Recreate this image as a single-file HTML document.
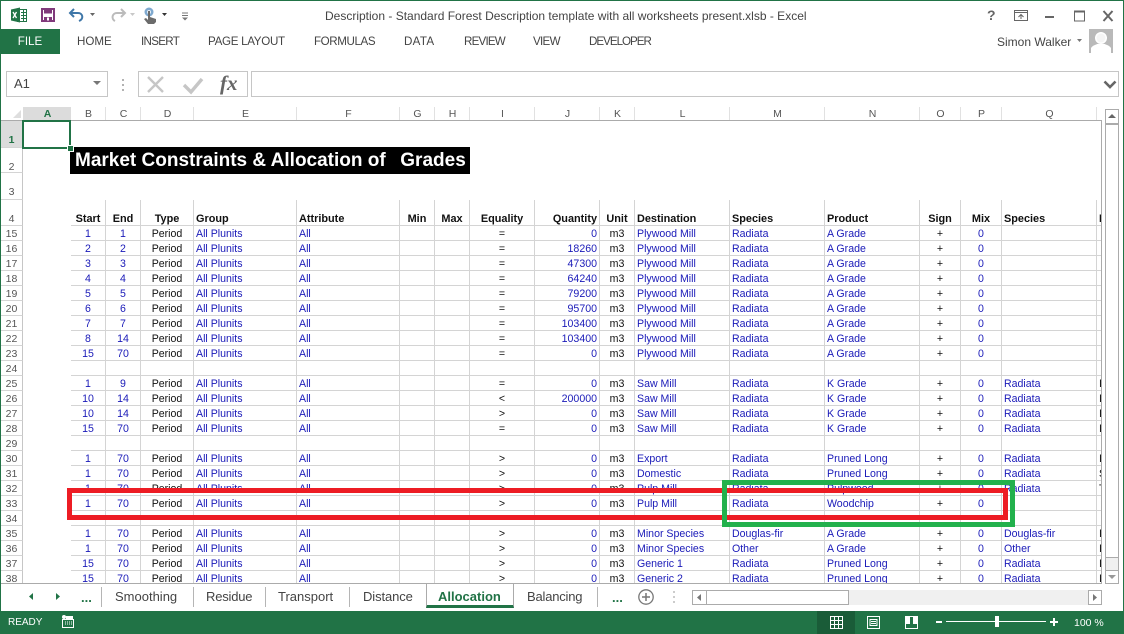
<!DOCTYPE html>
<html><head><meta charset="utf-8"><title>Excel</title>
<style>
html,body{margin:0;padding:0;background:#fff}
body{width:1124px;height:634px;overflow:hidden;position:relative;font-family:"Liberation Sans",sans-serif;color:#444}
.a{position:absolute}
.rib{position:absolute;top:35px;font-size:11.6px;color:#444;white-space:nowrap;line-height:14px}
.box{position:absolute;border:1px solid #c6c6c6;box-sizing:border-box;background:#fff}
.ch{position:absolute;top:107px;height:14px;line-height:15px;font-size:10.5px;color:#555;text-align:center;border-right:1px solid #e1e1e1;box-sizing:border-box;padding-left:1px}
#sheet{position:absolute;left:1px;top:121px;width:1101px;height:462px;overflow:hidden}
.rh{position:absolute;left:0;width:22px;text-align:center;font-size:10.5px;color:#555;border-right:1px solid #c6c6c6;border-bottom:1px solid #d4d4d4;box-sizing:border-box}
table{position:absolute;left:0;top:79px;border-collapse:separate;border-spacing:0;table-layout:fixed;width:1101px;font-size:10.6px;color:#1a1ab8}
td,th{box-sizing:border-box;height:15px;padding:2px 2px 0 2px;border-right:1px solid #d4d4d4;border-bottom:1px solid #d4d4d4;white-space:nowrap;overflow:hidden;font-weight:normal;line-height:12px;text-align:left}
th{padding:2px 0 0 0;text-align:center;font-size:10.5px;color:#555;border-right:1px solid #c6c6c6}
td.x{border:0}
td:nth-child(3),td:nth-child(4),td:nth-child(17){text-align:center}
td:nth-child(5),td:nth-child(10),td:nth-child(12),td:nth-child(16){text-align:center;color:#111}
td:nth-child(11){text-align:right}
td:nth-child(19){padding:2px 0 0 2px;color:#111;border-right:0}
tr.h td,tr.h th{height:26px;vertical-align:bottom;line-height:12px;padding-top:0}
tr.h td{font-weight:bold;color:#111;font-size:10.9px}
tr.h td:nth-child(11){text-align:right}
tr.h td:nth-child(12){padding:0}
.tab{position:absolute;top:589px;font-size:13px;color:#444;line-height:16px;white-space:nowrap}
.sep{position:absolute;top:587px;width:1px;height:20px;background:#b5b5b5}
</style></head>
<body>
<!-- window border -->
<div class="a" style="left:0;top:0;width:1124px;height:1px;background:#217346"></div>
<div class="a" style="left:0;top:0;width:1px;height:634px;background:#217346"></div>
<div class="a" style="left:1123px;top:0;width:1px;height:634px;background:#217346"></div>

<!-- QAT -->
<svg class="a" style="left:10px;top:7px" width="190" height="20" viewBox="0 0 190 20">
<rect x="7.500" y="2.500" width="9" height="12" fill="#fff" stroke="#217346"/>
<path d="M11 5.500h5M11 8.500h5M11 11.500h5M13.500 3v11" stroke="#217346" fill="none"/>
<path d="M1 2.500l9-2v15l-9-2z" fill="#217346"/>
<path d="M3 5l3.500 6M6.500 5l-3.500 6" stroke="#fff" stroke-width="1.300"/>
<rect x="32" y="2" width="12" height="12" fill="#fff" stroke="#80397b" stroke-width="2"/>
<rect x="34" y="2" width="8" height="4.500" fill="#80397b"/>
<rect x="34" y="10" width="8" height="4" fill="#80397b"/>
<rect x="37" y="10.500" width="2" height="3" fill="#fff"/>
<path d="M64 2l-4 4 4 4" fill="none" stroke="#3f77a8" stroke-width="2"/>
<path d="M61 6h7c5 0 6 6 1 8" fill="none" stroke="#3f77a8" stroke-width="2"/>
<path d="M80 6h5l-2.500 3z" fill="#666"/>
<path d="M111 2l4 4-4 4" fill="none" stroke="#bbb" stroke-width="2"/>
<path d="M114 6h-7c-5 0-6 6-2 8" fill="none" stroke="#bbb" stroke-width="2"/>
<path d="M120 6h5l-2.500 3z" fill="#c8c8c8"/>
<circle cx="139" cy="5" r="4.500" fill="#7fa9cf"/>
<circle cx="139" cy="5" r="2" fill="#e8eff6"/>
<path d="M138 4h2v6l6 2v3l-2 2h-6l-4-5 2-1 2 2z" fill="#6b6b6b"/>
<path d="M152 6h5l-2.500 3z" fill="#333"/>
<path d="M172 6h6M172 8.500h6" stroke="#777"/>
<path d="M172 10.500h6l-3 3z" fill="#777"/>
</svg>

<div class="a" style="left:325px;top:8px;font-size:12px;color:#444;line-height:16px;white-space:nowrap">Description - Standard Forest Description template with all worksheets present.xlsb - Excel</div>

<!-- window buttons -->
<div class="a" style="left:987px;top:7px;font-size:14px;font-weight:bold;color:#666;line-height:16px">?</div>
<svg class="a" style="left:1010px;top:6px" width="114" height="20" viewBox="0 0 114 20">
<rect x="4.500" y="4.500" width="13" height="10" fill="none" stroke="#666"/><path d="M4 6.500h14" stroke="#666"/>
<path d="M11 13V9M8.500 11l2.500-2.500 2.500 2.500" fill="none" stroke="#666"/>
<path d="M35 11h9" stroke="#666" stroke-width="2"/>
<rect x="64.500" y="5" width="10" height="10" fill="none" stroke="#666"/><path d="M64 5.500h11" stroke="#666" stroke-width="2"/>
<path d="M93.500 5l9 10M102.500 5l-9 10" stroke="#666" stroke-width="2"/>
</svg>

<!-- Ribbon tabs -->
<div class="a" style="left:0;top:29px;width:60px;height:25px;background:#217346;color:#fff;text-align:center;font-size:11.600px;line-height:26px">FILE</div>
<div class="rib" style="left:77px">HOME</div>
<div class="rib" style="left:141px;letter-spacing:-.7px">INSERT</div>
<div class="rib" style="left:208px;letter-spacing:-.3px">PAGE LAYOUT</div>
<div class="rib" style="left:314px;letter-spacing:-.4px">FORMULAS</div>
<div class="rib" style="left:404px;letter-spacing:.3px">DATA</div>
<div class="rib" style="left:464px;letter-spacing:-.8px">REVIEW</div>
<div class="rib" style="left:533px;letter-spacing:-.7px">VIEW</div>
<div class="rib" style="left:589px;letter-spacing:-1px">DEVELOPER</div>
<div class="rib" style="left:997px;font-size:12px">Simon Walker</div>
<svg class="a" style="left:1076px;top:38px" width="8" height="6"><path d="M1 1h5l-2.500 3z" fill="#777"/></svg>
<svg class="a" style="left:1089px;top:29px" width="24" height="24" viewBox="0 0 24 24"><rect width="24" height="24" fill="#b9b9b9"/><circle cx="12" cy="9" r="5.500" fill="#fff" stroke="#fff"/><path d="M2 24v-5c2-3 5-3 6-4h8c1 1 4 1 6 4v5z" fill="#fff"/><circle cx="12" cy="9" r="4.500" fill="#b9b9b9" opacity=".15"/></svg>

<!-- Formula bar -->
<div class="box" style="left:6px;top:71px;width:102px;height:26px;font-size:13px;line-height:24px;padding-left:7px;color:#444">A1</div>
<svg class="a" style="left:92px;top:80px" width="12" height="8"><path d="M1 1h8L5 5z" fill="#777"/></svg>
<svg class="a" style="left:120px;top:78px" width="6" height="14"><path d="M3 1v2M3 6v2M3 11v2" stroke="#999" stroke-width="1.500"/></svg>
<div class="box" style="left:138px;top:71px;width:110px;height:26px"></div>
<svg class="a" style="left:145px;top:74px" width="100" height="22" viewBox="0 0 100 22">
<path d="M3 3l15 15M18 3L3 18" stroke="#c6c6c6" stroke-width="2.400"/>
<path d="M39 11l7 7 11-13" fill="none" stroke="#c6c6c6" stroke-width="3.400"/>
<text x="75" y="16" font-family="Liberation Serif,serif" font-style="italic" font-weight="bold" font-size="21" fill="#666">fx</text>
</svg>
<div class="box" style="left:251px;top:71px;width:868px;height:26px"></div>
<svg class="a" style="left:1103px;top:80px" width="14" height="10"><path d="M1.500 1.500L7 7l5.500-5.500" fill="none" stroke="#666" stroke-width="2.600"/></svg>

<!-- Column headers -->
<svg class="a" style="left:12px;top:109px" width="10" height="10"><path d="M9 1v8H1z" fill="#dedede"/></svg>
<div class="ch" style="left:23px;width:48px;background:#dcdcdc;color:#217346;font-weight:bold;border-right:0;border-bottom:1px solid #aaa">A</div>
<div class="ch" style="left:71px;width:35px">B</div>
<div class="ch" style="left:106px;width:35px">C</div>
<div class="ch" style="left:141px;width:53px">D</div>
<div class="ch" style="left:194px;width:103px">E</div>
<div class="ch" style="left:297px;width:103px">F</div>
<div class="ch" style="left:400px;width:35px">G</div>
<div class="ch" style="left:435px;width:35px">H</div>
<div class="ch" style="left:470px;width:65px">I</div>
<div class="ch" style="left:535px;width:65px">J</div>
<div class="ch" style="left:600px;width:35px">K</div>
<div class="ch" style="left:635px;width:95px">L</div>
<div class="ch" style="left:730px;width:95px">M</div>
<div class="ch" style="left:825px;width:95px">N</div>
<div class="ch" style="left:920px;width:41px">O</div>
<div class="ch" style="left:961px;width:41px">P</div>
<div class="ch" style="left:1002px;width:95px">Q</div>
<div class="a" style="left:1px;top:120px;width:1101px;height:1px;background:#ababab"></div>

<!-- Sheet -->
<div id="sheet">
<div class="rh" style="top:0;height:27px;line-height:38px;background:#dcdcdc;color:#217346;font-weight:bold">1</div>
<div class="rh" style="top:27px;height:25px;line-height:38px">2</div>
<div class="rh" style="top:52px;height:27px;line-height:38px">3</div>
<table>
<colgroup><col style="width:22px"><col style="width:48px"><col style="width:35px"><col style="width:35px"><col style="width:53px"><col style="width:103px"><col style="width:103px"><col style="width:35px"><col style="width:35px"><col style="width:65px"><col style="width:65px"><col style="width:35px"><col style="width:95px"><col style="width:95px"><col style="width:95px"><col style="width:41px"><col style="width:41px"><col style="width:95px"><col style="width:5px"></colgroup>
<tr class="h"><th>4</th><td class="x"></td><td>Start</td><td>End</td><td>Type</td><td>Group</td><td>Attribute</td><td style="text-align:center">Min</td><td style="text-align:center">Max</td><td>Equality</td><td>Quantity</td><td>Unit</td><td>Destination</td><td>Species</td><td>Product</td><td>Sign</td><td>Mix</td><td>Species</td><td>I</td></tr>
<tr><th>15</th><td class="x"></td><td>1</td><td>1</td><td>Period</td><td>All Plunits</td><td>All</td><td></td><td></td><td>=</td><td>0</td><td>m3</td><td>Plywood Mill</td><td>Radiata</td><td>A Grade</td><td>+</td><td>0</td><td></td><td></td></tr>
<tr><th>16</th><td class="x"></td><td>2</td><td>2</td><td>Period</td><td>All Plunits</td><td>All</td><td></td><td></td><td>=</td><td>18260</td><td>m3</td><td>Plywood Mill</td><td>Radiata</td><td>A Grade</td><td>+</td><td>0</td><td></td><td></td></tr>
<tr><th>17</th><td class="x"></td><td>3</td><td>3</td><td>Period</td><td>All Plunits</td><td>All</td><td></td><td></td><td>=</td><td>47300</td><td>m3</td><td>Plywood Mill</td><td>Radiata</td><td>A Grade</td><td>+</td><td>0</td><td></td><td></td></tr>
<tr><th>18</th><td class="x"></td><td>4</td><td>4</td><td>Period</td><td>All Plunits</td><td>All</td><td></td><td></td><td>=</td><td>64240</td><td>m3</td><td>Plywood Mill</td><td>Radiata</td><td>A Grade</td><td>+</td><td>0</td><td></td><td></td></tr>
<tr><th>19</th><td class="x"></td><td>5</td><td>5</td><td>Period</td><td>All Plunits</td><td>All</td><td></td><td></td><td>=</td><td>79200</td><td>m3</td><td>Plywood Mill</td><td>Radiata</td><td>A Grade</td><td>+</td><td>0</td><td></td><td></td></tr>
<tr><th>20</th><td class="x"></td><td>6</td><td>6</td><td>Period</td><td>All Plunits</td><td>All</td><td></td><td></td><td>=</td><td>95700</td><td>m3</td><td>Plywood Mill</td><td>Radiata</td><td>A Grade</td><td>+</td><td>0</td><td></td><td></td></tr>
<tr><th>21</th><td class="x"></td><td>7</td><td>7</td><td>Period</td><td>All Plunits</td><td>All</td><td></td><td></td><td>=</td><td>103400</td><td>m3</td><td>Plywood Mill</td><td>Radiata</td><td>A Grade</td><td>+</td><td>0</td><td></td><td></td></tr>
<tr><th>22</th><td class="x"></td><td>8</td><td>14</td><td>Period</td><td>All Plunits</td><td>All</td><td></td><td></td><td>=</td><td>103400</td><td>m3</td><td>Plywood Mill</td><td>Radiata</td><td>A Grade</td><td>+</td><td>0</td><td></td><td></td></tr>
<tr><th>23</th><td class="x"></td><td>15</td><td>70</td><td>Period</td><td>All Plunits</td><td>All</td><td></td><td></td><td>=</td><td>0</td><td>m3</td><td>Plywood Mill</td><td>Radiata</td><td>A Grade</td><td>+</td><td>0</td><td></td><td></td></tr>
<tr><th>24</th><td class="x"></td><td></td><td></td><td></td><td></td><td></td><td></td><td></td><td></td><td></td><td></td><td></td><td></td><td></td><td></td><td></td><td></td><td></td></tr>
<tr><th>25</th><td class="x"></td><td>1</td><td>9</td><td>Period</td><td>All Plunits</td><td>All</td><td></td><td></td><td>=</td><td>0</td><td>m3</td><td>Saw Mill</td><td>Radiata</td><td>K Grade</td><td>+</td><td>0</td><td>Radiata</td><td>I</td></tr>
<tr><th>26</th><td class="x"></td><td>10</td><td>14</td><td>Period</td><td>All Plunits</td><td>All</td><td></td><td></td><td>&lt;</td><td>200000</td><td>m3</td><td>Saw Mill</td><td>Radiata</td><td>K Grade</td><td>+</td><td>0</td><td>Radiata</td><td>I</td></tr>
<tr><th>27</th><td class="x"></td><td>10</td><td>14</td><td>Period</td><td>All Plunits</td><td>All</td><td></td><td></td><td>&gt;</td><td>0</td><td>m3</td><td>Saw Mill</td><td>Radiata</td><td>K Grade</td><td>+</td><td>0</td><td>Radiata</td><td>I</td></tr>
<tr><th>28</th><td class="x"></td><td>15</td><td>70</td><td>Period</td><td>All Plunits</td><td>All</td><td></td><td></td><td>=</td><td>0</td><td>m3</td><td>Saw Mill</td><td>Radiata</td><td>K Grade</td><td>+</td><td>0</td><td>Radiata</td><td>I</td></tr>
<tr><th>29</th><td class="x"></td><td></td><td></td><td></td><td></td><td></td><td></td><td></td><td></td><td></td><td></td><td></td><td></td><td></td><td></td><td></td><td></td><td></td></tr>
<tr><th>30</th><td class="x"></td><td>1</td><td>70</td><td>Period</td><td>All Plunits</td><td>All</td><td></td><td></td><td>&gt;</td><td>0</td><td>m3</td><td>Export</td><td>Radiata</td><td>Pruned Long</td><td>+</td><td>0</td><td>Radiata</td><td>I</td></tr>
<tr><th>31</th><td class="x"></td><td>1</td><td>70</td><td>Period</td><td>All Plunits</td><td>All</td><td></td><td></td><td>&gt;</td><td>0</td><td>m3</td><td>Domestic</td><td>Radiata</td><td>Pruned Long</td><td>+</td><td>0</td><td>Radiata</td><td>S</td></tr>
<tr><th>32</th><td class="x"></td><td>1</td><td>70</td><td>Period</td><td>All Plunits</td><td>All</td><td></td><td></td><td>&gt;</td><td>0</td><td>m3</td><td>Pulp Mill</td><td>Radiata</td><td>Pulpwood</td><td>+</td><td>0</td><td>Radiata</td><td>T</td></tr>
<tr><th>33</th><td class="x"></td><td>1</td><td>70</td><td>Period</td><td>All Plunits</td><td>All</td><td></td><td></td><td>&gt;</td><td>0</td><td>m3</td><td>Pulp Mill</td><td>Radiata</td><td>Woodchip</td><td>+</td><td>0</td><td></td><td></td></tr>
<tr><th>34</th><td class="x"></td><td></td><td></td><td></td><td></td><td></td><td></td><td></td><td></td><td></td><td></td><td></td><td></td><td></td><td></td><td></td><td></td><td></td></tr>
<tr><th>35</th><td class="x"></td><td>1</td><td>70</td><td>Period</td><td>All Plunits</td><td>All</td><td></td><td></td><td>&gt;</td><td>0</td><td>m3</td><td>Minor Species</td><td>Douglas-fir</td><td>A Grade</td><td>+</td><td>0</td><td>Douglas-fir</td><td>I</td></tr>
<tr><th>36</th><td class="x"></td><td>1</td><td>70</td><td>Period</td><td>All Plunits</td><td>All</td><td></td><td></td><td>&gt;</td><td>0</td><td>m3</td><td>Minor Species</td><td>Other</td><td>A Grade</td><td>+</td><td>0</td><td>Other</td><td>I</td></tr>
<tr><th>37</th><td class="x"></td><td>15</td><td>70</td><td>Period</td><td>All Plunits</td><td>All</td><td></td><td></td><td>&gt;</td><td>0</td><td>m3</td><td>Generic 1</td><td>Radiata</td><td>Pruned Long</td><td>+</td><td>0</td><td>Radiata</td><td>I</td></tr>
<tr><th>38</th><td class="x"></td><td>15</td><td>70</td><td>Period</td><td>All Plunits</td><td>All</td><td></td><td></td><td>&gt;</td><td>0</td><td>m3</td><td>Generic 2</td><td>Radiata</td><td>Pruned Long</td><td>+</td><td>0</td><td>Radiata</td><td>I</td></tr>
</table>
</div>
<div class="a" style="left:1px;top:583px;width:1101px;height:1px;background:#ababab"></div>
<div class="a" style="left:1101px;top:121px;width:1px;height:463px;background:#ababab"></div>

<!-- Title -->
<div class="a" style="left:70px;top:147px;width:400px;height:27px;background:#000;color:#fff;font-weight:bold;font-size:19px;line-height:28px;padding-left:5px;box-sizing:border-box;white-space:pre">Market Constraints &amp; Allocation of  <span style="margin-left:4px">Grades</span></div>

<!-- Selection -->
<div class="a" style="left:22px;top:120px;width:49px;height:29px;border:2px solid #217346;box-sizing:border-box"></div>
<div class="a" style="left:68px;top:146px;width:5px;height:5px;background:#217346;outline:1px solid #fff"></div>

<!-- Annotation boxes -->
<div class="a" style="left:67px;top:488px;width:941px;height:32px;border:5px solid #ed1c24;box-sizing:border-box"></div>
<div class="a" style="left:722px;top:480px;width:293px;height:47px;border:5px solid #22b14c;box-sizing:border-box"></div>

<!-- Vertical scrollbar -->
<div class="a" style="left:1105px;top:109px;width:14px;height:475px;border:1px solid #ababab;box-sizing:border-box;background:#fff"></div>
<div class="a" style="left:1105px;top:123px;width:14px;height:2px;background:#ababab"></div>
<div class="a" style="left:1106px;top:557px;width:12px;height:13px;border-top:1px solid #ababab;background:#f0f0f0;box-sizing:border-box"></div>
<div class="a" style="left:1105px;top:570px;width:14px;height:1px;background:#ababab"></div>
<svg class="a" style="left:1105px;top:109px" width="14" height="14"><path d="M3 9h8L7 5z" fill="#666"/></svg>
<svg class="a" style="left:1105px;top:571px" width="14" height="12"><path d="M3 4h8L7 8z" fill="#999"/></svg>

<!-- Tabs -->
<svg class="a" style="left:20px;top:589px" width="50" height="16"><path d="M13 4v7L9 7.500z" fill="#217346"/><path d="M36 4v7l4-3.500z" fill="#217346"/></svg>
<div class="a" style="left:81px;top:591px;font-size:13px;font-weight:bold;color:#217346;line-height:14px">...</div>
<div class="sep" style="left:101px"></div>
<div class="tab" style="left:115px">Smoothing</div>
<div class="sep" style="left:193px"></div>
<div class="tab" style="left:206px;letter-spacing:-.2px">Residue</div>
<div class="sep" style="left:265px"></div>
<div class="tab" style="left:278px">Transport</div>
<div class="sep" style="left:349px"></div>
<div class="tab" style="left:363px;letter-spacing:-.1px">Distance</div>
<div class="a" style="left:426px;top:583px;width:88px;height:25px;background:#fff;border:1px solid #ababab;border-bottom:3px solid #217346;box-sizing:border-box"></div>
<div class="tab" style="left:438px;color:#217346;font-weight:bold">Allocation</div>
<div class="tab" style="left:527px;letter-spacing:-.2px">Balancing</div>
<div class="sep" style="left:597px"></div>
<div class="a" style="left:612px;top:591px;font-size:13px;font-weight:bold;color:#217346;line-height:14px">...</div>
<svg class="a" style="left:637px;top:588px" width="18" height="18"><circle cx="9" cy="9" r="7.200" fill="none" stroke="#777" stroke-width="1.300"/><path d="M9 5v8M5 9h8" stroke="#777" stroke-width="1.500"/></svg>
<svg class="a" style="left:671px;top:590px" width="6" height="14"><path d="M3 1v2M3 6v2M3 11v2" stroke="#bbb" stroke-width="1.500"/></svg>

<!-- Horizontal scrollbar -->
<div class="a" style="left:692px;top:590px;width:410px;height:15px;background:#f0f0f0"></div>
<div class="a" style="left:692px;top:590px;width:15px;height:15px;background:#fff;border:1px solid #ababab;box-sizing:border-box"></div>
<div class="a" style="left:706px;top:590px;width:143px;height:15px;background:#fff;border:1px solid #ababab;box-sizing:border-box"></div>
<div class="a" style="left:1088px;top:590px;width:14px;height:15px;background:#fff;border:1px solid #ababab;box-sizing:border-box"></div>
<svg class="a" style="left:695px;top:593px" width="8" height="10"><path d="M6 1v7L2 4.500z" fill="#777"/></svg>
<svg class="a" style="left:1091px;top:593px" width="8" height="10"><path d="M2 1v7l4-3.500z" fill="#777"/></svg>

<!-- Status bar -->
<div class="a" style="left:0;top:611px;width:1124px;height:23px;background:#217346"></div>
<div class="a" style="left:8px;top:616px;color:#fff;font-size:10px;line-height:14px">READY</div>
<svg class="a" style="left:60px;top:614px" width="16" height="16"><rect x="2.500" y="5.500" width="11" height="8" fill="none" stroke="#fff"/><path d="M5 8h1M7 8h1M9 8h1M11 8h1M5 10h1M7 10h1M9 10h1M11 10h1" stroke="#fff"/><circle cx="4" cy="3" r="2" fill="#fff"/><rect x="6" y="2" width="7" height="3" fill="#fff"/></svg>
<div class="a" style="left:817px;top:611px;width:38px;height:23px;background:#1a5c38"></div>
<svg class="a" style="left:817px;top:611px" width="120" height="23" viewBox="0 0 120 23">
<path d="M13.500 5.500h12v12h-12zM13.500 9.500h12M13.500 13.500h12M17.500 5.500v12M21.500 5.500v12" fill="none" stroke="#fff"/>
<path d="M50.500 5.500h12v12h-12z" fill="none" stroke="#fff"/><path d="M53 8.500h7v6h-7z" fill="none" stroke="#fff"/><path d="M54 10.500h5M54 12.500h5" stroke="#fff"/>
<path d="M88.500 5.500h12v12h-12z" fill="none" stroke="#fff"/><path d="M89 6h4v7h-4zM96 6h4v7h-4z" fill="#fff"/>
</svg>
<div class="a" style="left:936px;top:621px;width:6px;height:2px;background:#fff"></div>
<div class="a" style="left:946px;top:621px;width:100px;height:1px;background:#fff"></div>
<div class="a" style="left:995px;top:616px;width:4px;height:11px;background:#fff"></div>
<div class="a" style="left:1050px;top:621px;width:8px;height:2px;background:#fff"></div>
<div class="a" style="left:1053px;top:618px;width:2px;height:8px;background:#fff"></div>
<div class="a" style="left:1074px;top:616px;color:#fff;font-size:10.500px;line-height:14px">100 %</div>
</body></html>
